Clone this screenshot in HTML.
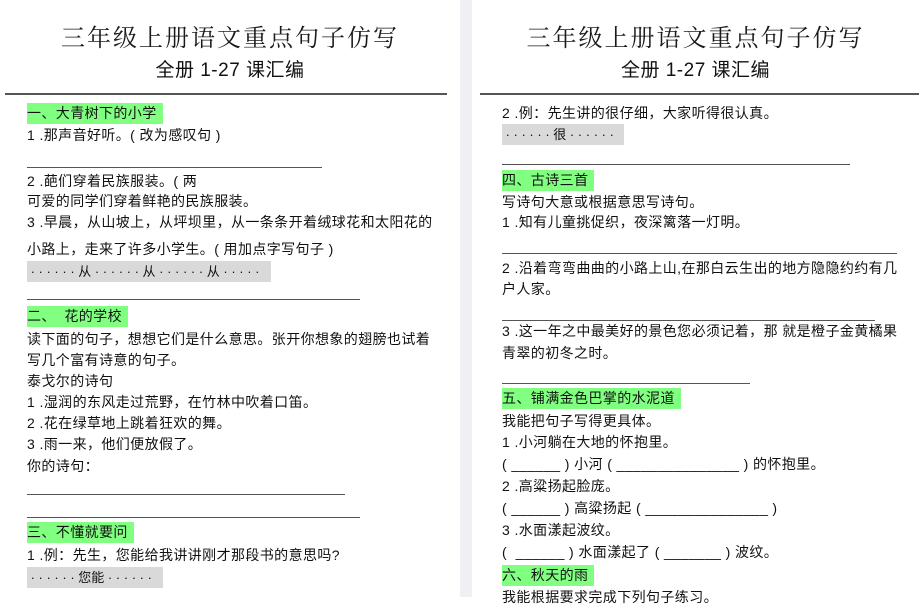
<!DOCTYPE html><html><head><meta charset="utf-8"><style>
*{margin:0;padding:0}
body{width:919px;height:597px;overflow:hidden;background:#fff;position:relative;font-family:"Liberation Sans","WenQuanYi Zen Hei","Noto Sans CJK SC",sans-serif;color:#111}
.t{position:absolute;font-size:14px;letter-spacing:0.4px;line-height:20px;white-space:nowrap}
.g{background:#80ff80;padding:0 6px 0 0;line-height:21px}
.s{background:#d9d9d9;line-height:21px;overflow:hidden;letter-spacing:0;font-size:13px}
.r{position:absolute;height:1px;background:#555}
.h1{position:absolute;font-size:24px;letter-spacing:2px;color:#1a1a1a;text-align:center;font-family:"Noto Serif CJK SC","WenQuanYi Zen Hei",serif}
.h2{position:absolute;font-size:19px;color:#111;text-align:center;letter-spacing:0.5px}
.gap{position:absolute;left:460px;top:0;width:12px;height:597px;background:#eef0f3}
</style></head><body>
<div class="gap"></div>
<div class="h1" style="left:0;width:460px;top:18px">三年级上册语文重点句子仿写</div>
<div class="h2" style="left:0;width:460px;top:55px">全册 1-27 课汇编</div>
<div class="r" style="left:5px;width:442px;top:93px;height:2px"></div>
<div class="h1" style="left:472px;width:447px;top:18px">三年级上册语文重点句子仿写</div>
<div class="h2" style="left:472px;width:447px;top:55px">全册 1-27 课汇编</div>
<div class="r" style="left:480px;width:439px;top:93px;height:2px"></div>

<div class="t g" style="left:27px;top:103px">一、大青树下的小学</div>
<div class="t" style="left:27px;top:125px">1 .那声音好听。( 改为感叹句 )</div>
<div class="r" style="left:27px;width:295px;top:167px"></div>
<div class="t" style="left:27px;top:171px">2 .葩们穿着民族服装。( 两</div>
<div class="t" style="left:27px;top:191px">可爱的同学们穿着鲜艳的民族服装。</div>
<div class="t" style="left:27px;top:212px">3 .早晨，从山坡上，从坪坝里，从一条条开着绒球花和太阳花的</div>
<div class="t" style="left:27px;top:239px">小路上，走来了许多小学生。( 用加点字写句子 )</div>
<div class="t s" style="left:27px;top:261px;width:244px">&nbsp;· · · · · · 从 · · · · · · 从 · · · · · · 从 · · · · ·</div>
<div class="r" style="left:27px;width:333px;top:299px"></div>
<div class="t g" style="left:27px;top:306px">二、&nbsp;&nbsp;花的学校</div>
<div class="t" style="left:27px;top:329px">读下面的句子，想想它们是什么意思。张开你想象的翅膀也试着</div>
<div class="t" style="left:27px;top:350px">写几个富有诗意的句子。</div>
<div class="t" style="left:27px;top:371px">泰戈尔的诗句</div>
<div class="t" style="left:27px;top:392px">1 .湿润的东风走过荒野，在竹林中吹着口笛。</div>
<div class="t" style="left:27px;top:413px">2 .花在绿草地上跳着狂欢的舞。</div>
<div class="t" style="left:27px;top:434px">3 .雨一来，他们便放假了。</div>
<div class="t" style="left:27px;top:456px">你的诗句：</div>
<div class="r" style="left:27px;width:318px;top:494px"></div>
<div class="r" style="left:27px;width:333px;top:517px"></div>
<div class="t g" style="left:27px;top:522px">三、不懂就要问</div>
<div class="t" style="left:27px;top:545px">1 .例：先生，您能给我讲讲刚才那段书的意思吗?</div>
<div class="t s" style="left:27px;top:567px;width:136px">&nbsp;· · · · · · 您能 · · · · · ·</div>

<div class="t" style="left:502px;top:103px">2 .例：先生讲的很仔细，大家听得很认真。</div>
<div class="t s" style="left:502px;top:124px;width:122px">&nbsp;· · · · · · 很 · · · · · ·</div>
<div class="r" style="left:502px;width:348px;top:164px"></div>
<div class="t g" style="left:502px;top:170px">四、古诗三首</div>
<div class="t" style="left:502px;top:192px">写诗句大意或根据意思写诗句。</div>
<div class="t" style="left:502px;top:212px">1 .知有儿童挑促织，夜深篱落一灯明。</div>
<div class="r" style="left:502px;width:395px;top:253px"></div>
<div class="t" style="left:502px;top:258px">2 .沿着弯弯曲曲的小路上山,在那白云生出的地方隐隐约约有几</div>
<div class="t" style="left:502px;top:279px">户人家。</div>
<div class="r" style="left:502px;width:373px;top:320px"></div>
<div class="t" style="left:502px;top:321px">3 .这一年之中最美好的景色您必须记着，那 就是橙子金黄橘果</div>
<div class="t" style="left:502px;top:343px">青翠的初冬之时。</div>
<div class="r" style="left:502px;width:248px;top:383px"></div>
<div class="t g" style="left:502px;top:388px">五、铺满金色巴掌的水泥道</div>
<div class="t" style="left:502px;top:411px">我能把句子写得更具体。</div>
<div class="t" style="left:502px;top:432px">1 .小河躺在大地的怀抱里。</div>
<div class="t" style="left:502px;top:454px">( ______ ) 小河 ( _______________ ) 的怀抱里。</div>
<div class="t" style="left:502px;top:476px">2 .高粱扬起脸庞。</div>
<div class="t" style="left:502px;top:498px">( ______ ) 高粱扬起 ( _______________ )</div>
<div class="t" style="left:502px;top:520px">3 .水面漾起波纹。</div>
<div class="t" style="left:502px;top:542px">(&nbsp; ______ ) 水面漾起了 ( _______ ) 波纹。</div>
<div class="t g" style="left:502px;top:565px">六、秋天的雨</div>
<div class="t" style="left:502px;top:587px">我能根据要求完成下列句子练习。</div>
</body></html>
